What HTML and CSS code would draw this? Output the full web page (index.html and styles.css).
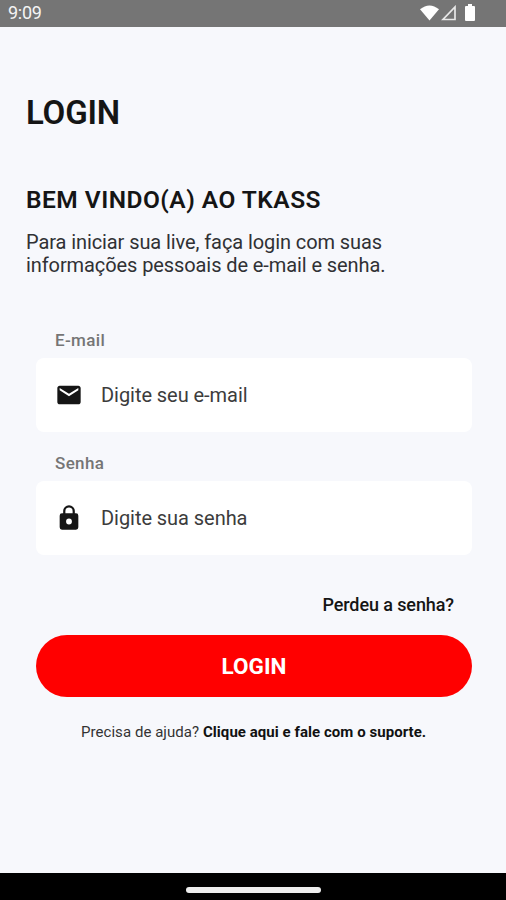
FILE: index.html
```
<!DOCTYPE html>
<html lang="pt-BR">
<head>
<meta charset="UTF-8">
<meta name="viewport" content="width=device-width, initial-scale=1.0">
<title>Login</title>
<link rel="stylesheet" href="styles.css">
</head>
<body>
<div class="status-bar">
  <span class="time">9:09</span>
  <div class="status-icons">
    <svg class="wifi" viewBox="0 0 20 16"><path d="M0 4Q10-4 20 4L10 16Z"/></svg>
    <svg class="signal" viewBox="0 0 16 16"><path d="M14 2v12.500H2Z"/></svg>
    <svg class="battery" viewBox="0 0 10 17"><path d="M3 0h4v2h2q1 0 1 1v13q0 1-1 1H1q-1 0-1-1V3q0-1 1-1h2Z"/></svg>
  </div>
</div>

<main class="screen">
  <h1>LOGIN</h1>
  <h2>BEM VINDO(A) AO TKASS</h2>
  <p class="intro">Para iniciar sua live, faça login com suas<br>informações pessoais de e-mail e senha.</p>

  <form class="login-form">
    <label for="email">E-mail</label>
    <div class="field">
      <svg viewBox="0 0 24 24"><path d="M20 4H4c-1.100 0-2 .9-2 2v12c0 1.100.9 2 2 2h16c1.100 0 2-.9 2-2V6c0-1.100-.9-2-2-2zm0 4l-8 5-8-5V6l8 5 8-5v2z"/></svg>
      <input type="email" id="email" placeholder="Digite seu e-mail">
    </div>
    <label for="senha">Senha</label>
    <div class="field">
      <svg viewBox="0 0 24 24"><path fill-rule="evenodd" d="M18 8h-1V6A5 5 0 0 0 7 6v2H6a2 2 0 0 0-2 2v10a2 2 0 0 0 2 2h12a2 2 0 0 0 2-2V10a2 2 0 0 0-2-2zM8.900 6a3.100 3.100 0 0 1 6.200 0v2H8.900zM12 12.500a2.500 2.500 0 0 1 0 5a2.500 2.500 0 0 1 0-5z"/></svg>
      <input type="password" id="senha" placeholder="Digite sua senha">
    </div>
    <a class="forgot">Perdeu a senha?</a>
    <button type="button">LOGIN</button>
  </form>
  <p class="help">Precisa de ajuda? <b>Clique aqui e fale com o suporte.</b></p>
</main>

<div class="nav-bar"><span class="handle"></span></div>
</body>
</html>
```

FILE: styles.css
```
* {
  box-sizing: border-box;
}

body {
  margin: 0;
  height: 900px;
  display: flex;
  flex-direction: column;
  background: #f7f8fc;
  color: #151515;
  font-family: Roboto, sans-serif;
  overflow: hidden;
}

.status-bar {
  height: 27px;
  padding: 0 31px 0 8px;
  display: flex;
  align-items: center;
  justify-content: space-between;
  background: #757575;
  color: #f4f4f4;
  font-size: 18px;
}

.time {
  letter-spacing: -0.3px;
  line-height: 24px;
  padding-bottom: 2px;
}

.status-icons {
  display: flex;
  align-items: center;
  gap: 2px;
  padding-bottom: 2px;
}

.wifi {
  width: 19px;
  height: 16px;
  fill: #fff;
}

.signal {
  width: 16px;
  height: 16px;
  fill: none;
  stroke: #e8e8e8;
  stroke-width: 1.7;
}

.battery {
  width: 10px;
  height: 17px;
  margin-left: 6px;
  fill: #fff;
}

.screen {
  flex: 1;
  padding: 66px 34px 0 26px;
}

h1, h2, p {
  margin: 0;
}

h1 {
  font-size: 33px;
  font-weight: 600;
  line-height: 40px;
  letter-spacing: -0.2px;
}

h2 {
  margin-top: 51px;
  font-size: 24.5px;
  font-weight: 600;
  line-height: 32px;
  letter-spacing: 0.48px;
  white-space: nowrap;
}

.intro {
  margin-top: 15px;
  color: #303134;
  font-size: 20px;
  line-height: 23px;
  letter-spacing: -0.09px;
  white-space: nowrap;
}

.login-form {
  margin: 51px 0 0 10px;
  display: flex;
  flex-direction: column;
}

label {
  height: 30px;
  padding-left: 19px;
  color: #757575;
  font-size: 17px;
  font-weight: 500;
  line-height: 24px;
  letter-spacing: 0.35px;
}

.field {
  height: 74px;
  margin-bottom: 19px;
  padding-left: 19px;
  display: flex;
  align-items: center;
  gap: 18px;
  border-radius: 8px;
  background: #fff;
}

.field svg {
  width: 28px;
  height: 28px;
  fill: #151515;
}

.field input {
  flex: 1;
  padding: 0;
  border: 0;
  outline: 0;
  background: none;
  font: 20px Roboto, sans-serif;
  letter-spacing: -0.05px;
}

.field input::placeholder {
  color: #3c3c3c;
}

.forgot {
  margin: 20px 18px 0 0;
  align-self: flex-end;
  font-size: 18px;
  font-weight: 500;
  line-height: 22px;
  letter-spacing: -0.1px;
}

button {
  height: 62px;
  margin-top: 19px;
  border: 0;
  border-radius: 31px;
  background: #f00;
  color: #fff;
  font: bold 22.5px Roboto, sans-serif;
}

.help {
  margin-top: 25px;
  padding-left: 55px;
  color: #333;
  font-size: 15px;
  line-height: 20px;
  letter-spacing: 0.05px;
  white-space: nowrap;
}

.help b {
  color: #111;
}

.nav-bar {
  height: 27px;
  display: flex;
  justify-content: center;
  padding-top: 14px;
  background: #000;
}

.handle {
  width: 135px;
  height: 6px;
  border-radius: 3px;
  background: #eee;
}
```
